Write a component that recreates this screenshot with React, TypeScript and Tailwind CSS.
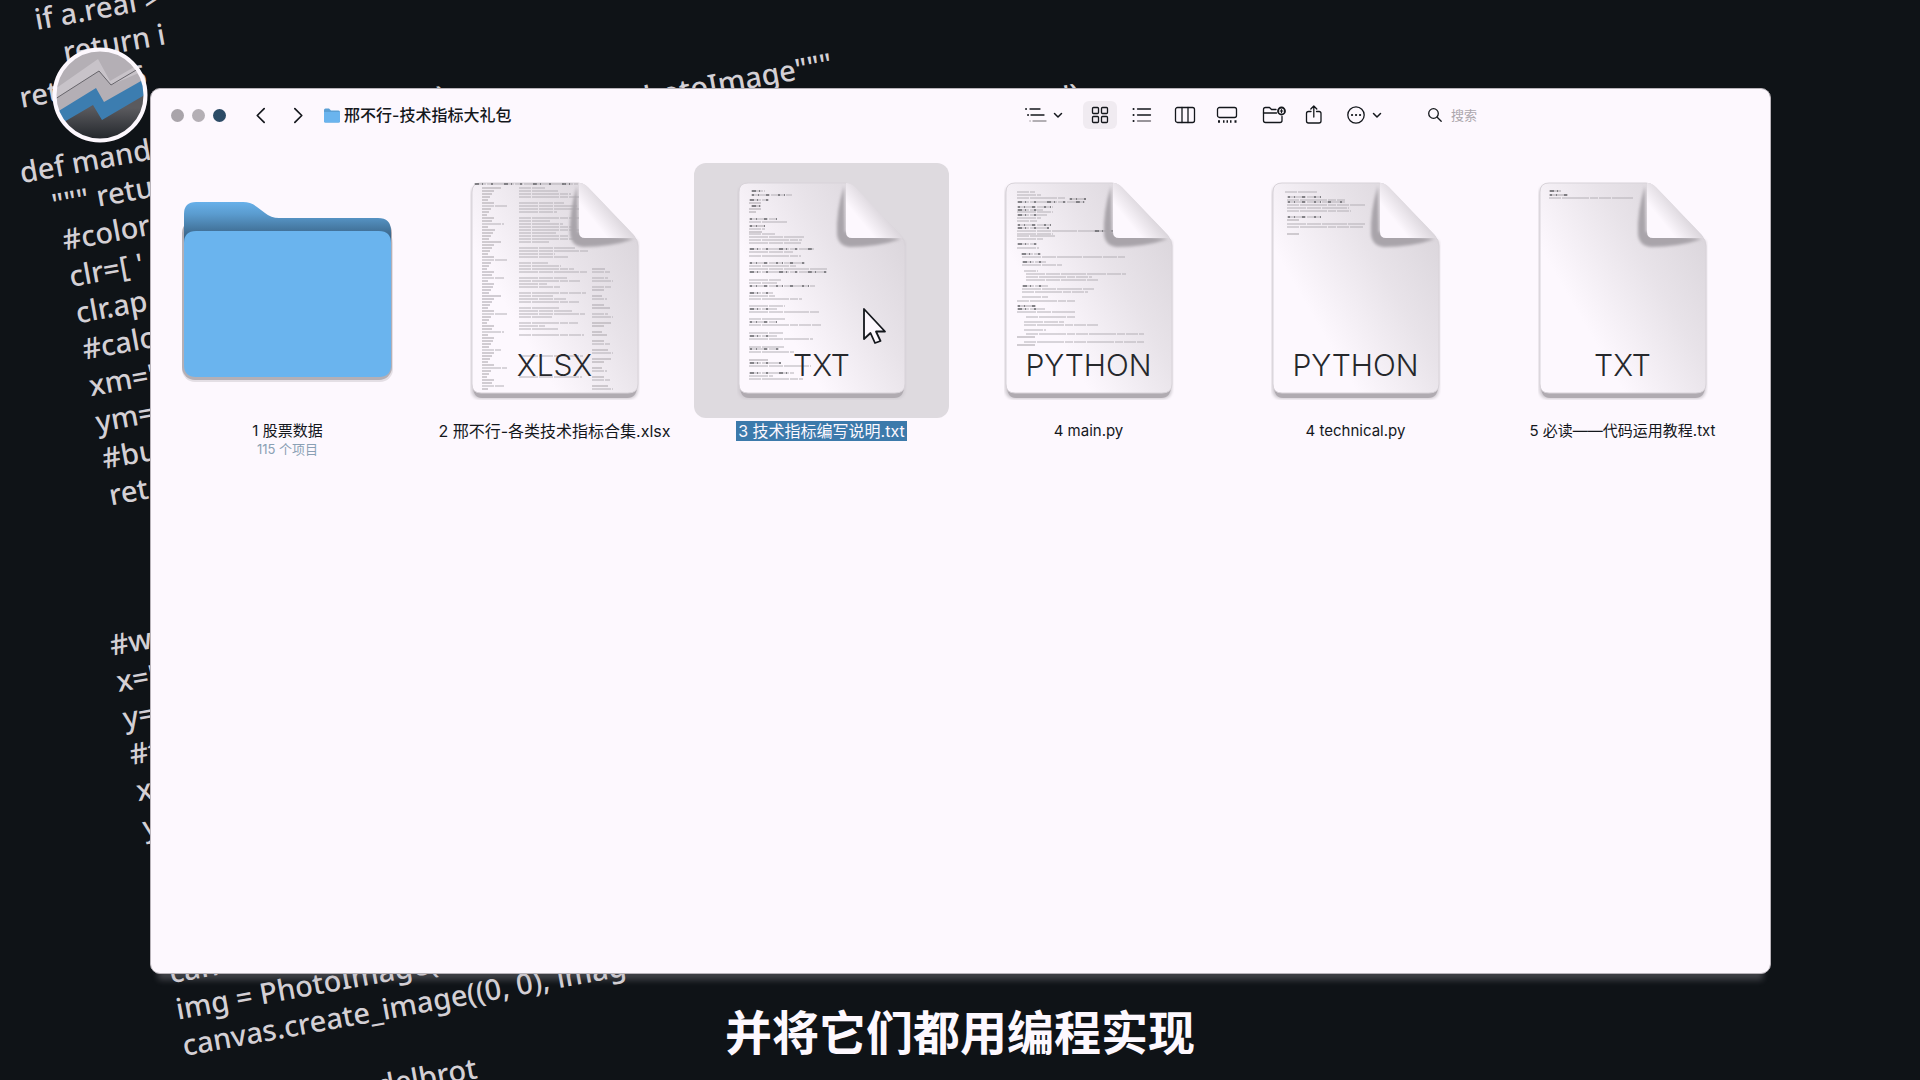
import type { ReactNode } from "react";

type Row = [y: number, x: number, w: number, dark?: boolean];

const CJK = "font-['Inter','Noto_Sans_CJK_SC',sans-serif]";

const CODE: { text: string; indent: string; tail?: string; tailIndent?: string }[] = [
  { text: "if a.real >", indent: "ml-[42px]" },
  { text: "return i", indent: "ml-[64px]" },
  { text: "return 56", indent: "ml-[13px]" },
  { text: "", indent: "" },
  { text: "def mand", indent: "ml-0", tail: "):", tailIndent: "left-[424px]" },
  { text: '""" retu', indent: "ml-[26px]", tail: 'PhotoImage"""', tailIndent: "left-[610px]" },
  { text: "#color", indent: "ml-[30px]" },
  { text: "clr=[ '", indent: "ml-[30px]", tail: "ry')", tailIndent: "left-[1012px]" },
  { text: "clr.ap", indent: "ml-[30px]" },
  { text: "#calc", indent: "ml-[30px]" },
  { text: "xm='", indent: "ml-[30px]" },
  { text: "ym=", indent: "ml-[30px]" },
  { text: "#bu", indent: "ml-[30px]" },
  { text: "ret", indent: "ml-[30px]" },
  { text: "", indent: "" },
  { text: "", indent: "" },
  { text: "", indent: "" },
  { text: "#w", indent: "ml-[4px]" },
  { text: "x='", indent: "ml-[4px]" },
  { text: "y=", indent: "ml-[4px]" },
  { text: "#t", indent: "ml-[4px]" },
  { text: "x", indent: "ml-[4px]" },
  { text: "y", indent: "ml-[4px]" },
  { text: "", indent: "" },
  { text: "", indent: "" },
  { text: "", indent: "" },
  { text: "canv", indent: "ml-[4px]" },
  { text: "img = PhotoImage(", indent: "ml-[4px]" },
  { text: "canvas.create_image((0, 0), imag", indent: "ml-[4px]" },
  { text: "", indent: "" },
  { text: "mandelbrot", indent: "ml-[126px]" },
];

const NOTES_ROWS: Row[] = [
  [9, 14, 14, true], [13, 14, 41, true], [18, 12, 20, true], [21, 12, 12], [24, 14, 10, true], [27, 12, 12], [30, 12, 7],
  [37, 12, 28, true], [40, 12, 38], [44, 12, 16, true], [47, 12, 16], [50, 12, 13], [52, 12, 26], [55, 12, 55], [58, 12, 53], [61, 12, 52],
  [67, 12, 65, true], [70, 12, 44], [74, 12, 52], [81, 12, 56, true], [84, 12, 47], [87, 12, 78], [90, 12, 78, true],
  [98, 12, 32], [101, 12, 28], [104, 12, 66, true], [111, 12, 24, true], [114, 12, 26], [117, 12, 53],
  [124, 12, 36], [127, 12, 28, true], [130, 12, 70], [137, 12, 36], [140, 12, 28, true], [143, 12, 72],
  [151, 12, 35], [154, 12, 28, true], [157, 12, 64], [165, 12, 35], [167, 12, 30, true], [170, 12, 45],
  [178, 12, 20], [181, 12, 32, true], [184, 12, 62], [191, 12, 45, true], [194, 12, 24], [197, 12, 54],
];

const MAIN_ROWS: Row[] = [
  [10, 13, 18], [13, 13, 24], [16, 13, 48], [17, 65, 17, true], [20, 13, 68, true], [25, 13, 36, true], [28, 13, 26, true],
  [30, 13, 36], [33, 13, 30, true], [36, 13, 24], [39, 13, 20], [43, 13, 34, true], [46, 13, 32, true], [49, 13, 96], [49, 90, 19, true],
  [52, 13, 36], [54, 13, 38], [57, 13, 26], [62, 13, 20, true], [66, 13, 22], [72, 17, 20, true], [75, 18, 103],
  [80, 18, 24, true], [83, 18, 40], [89, 20, 14], [92, 22, 100], [95, 22, 66], [98, 22, 72], [104, 18, 26, true],
  [107, 18, 72], [110, 18, 66], [115, 18, 26], [119, 13, 58], [124, 13, 20, true], [127, 13, 28, true], [130, 13, 58],
  [135, 22, 50], [140, 20, 40], [143, 20, 74], [148, 20, 22], [152, 22, 118], [155, 13, 18], [160, 20, 120], [163, 13, 18],
];

const TECH_ROWS: Row[] = [
  [10, 14, 32], [15, 16, 34, true], [18, 16, 58], [20, 16, 58, true], [23, 16, 78], [26, 16, 62], [29, 16, 64],
  [35, 16, 34, true], [38, 16, 12], [42, 16, 78], [45, 16, 76], [52, 16, 12],
];

const GUIDE_ROWS: Row[] = [[9, 11, 12, true], [13, 11, 20, true], [16, 11, 84]];

const SHEET_ROWS: Row[] = [
  [2, 4, 104, true] as Row,
  ...Array.from({ length: 68 }, (_, i): Row[] => {
    const y = 6 + i * 3;
    const rows: Row[] = [[y, 12, 5 + ((i * 7) % 9) + (i % 6 === 0 ? 14 : 0)]];
    if ((y < 150 && i % 5 !== 4) || i % 7 === 0) rows.push([y, 49, 26 + ((i * 13) % 46)]);
    if (y > 82 && i % 3 !== 2) rows.push([y, 122, 10 + ((i * 5) % 12)]);
    return rows;
  }).flat(),
];

function CodeBackdrop() {
  return (
    <div
      aria-hidden="true"
      className="absolute -left-[10px] top-[8px] w-[1400px] origin-top-left -rotate-[10.3deg] font-['Noto_Sans','Open_Sans',sans-serif] text-[29px] font-medium leading-[37px] text-[#d4d0d5]"
    >
      {CODE.map((line, i) => (
        <div key={i} className="relative h-[37px] whitespace-pre">
          <span className={line.indent}>{line.text}</span>
          {line.tail && <span className={`absolute top-0 ${line.tailIndent}`}>{line.tail}</span>}
        </div>
      ))}
    </div>
  );
}

function Avatar() {
  return (
    <svg viewBox="0 0 96 96" className="absolute left-[52px] top-[47px] size-24" role="img" aria-label="频道头像">
      <defs>
        <clipPath id="avatar-clip"><circle cx="48" cy="48" r="45" /></clipPath>
        <linearGradient id="avatar-low" x1="0" y1="0" x2="0" y2="1">
          <stop offset="0.3" stopColor="#5a5a5e" />
          <stop offset="1" stopColor="#1c2025" />
        </linearGradient>
      </defs>
      <g clipPath="url(#avatar-clip)">
        <rect width="96" height="96" fill="#b4afb5" />
        <path d="M0 44 L46 12 L58 34 L96 12 V22 L59 38 L47 24 L0 54Z" fill="#c8c3c9" />
        <path d="M0 54 L47 24 L59 38 L96 16" fill="none" stroke="#66646a" strokeWidth="1" />
        <path d="M0 68 L44 41 L52 55 L96 30 V96 H0Z" fill="#3c7db0" />
        <path d="M0 82 L41 58 L50 73 L96 46 V96 H0Z" fill="url(#avatar-low)" />
      </g>
      <circle cx="48" cy="48" r="45.5" fill="none" stroke="#fdf8fe" strokeWidth="4" />
    </svg>
  );
}

function Chevron({ d, className }: { d: string; className: string }) {
  return (
    <svg viewBox="0 0 16 16" className={className} fill="none" stroke="currentColor" strokeWidth="1.6" strokeLinecap="round" strokeLinejoin="round">
      <path d={d} />
    </svg>
  );
}

function DownChevron() {
  return (
    <svg viewBox="0 0 10 10" className="size-[10px]" fill="none" stroke="currentColor" strokeWidth="1.5" strokeLinecap="round" strokeLinejoin="round">
      <path d="M1.500 3.500 L5 7 L8.500 3.500" />
    </svg>
  );
}

function ToolIcon({ children }: { children: ReactNode }) {
  return (
    <svg viewBox="0 0 24 20" className="h-5 w-6 shrink-0" fill="none" stroke="currentColor" strokeWidth="1.3" strokeLinecap="round" strokeLinejoin="round">
      {children}
    </svg>
  );
}

function ToolButton({ label, className = "", children }: { label: string; className?: string; children: ReactNode }) {
  return (
    <button type="button" aria-label={label} className={`flex h-7 w-[34px] items-center justify-center rounded-md ${className}`}>
      <ToolIcon>{children}</ToolIcon>
    </button>
  );
}

function Toolbar() {
  return (
    <header className="flex h-[52px] items-center pl-5 pr-[10px]">
      <div className="flex gap-2">
        <button type="button" aria-label="关闭" className="size-[13px] rounded-full bg-[#a9a4aa]" />
        <button type="button" aria-label="最小化" className="size-[13px] rounded-full bg-[#b4afb5]" />
        <button type="button" aria-label="缩放" className="size-[13px] rounded-full bg-[#2c4b66]" />
      </div>
      <button type="button" aria-label="后退" className="ml-[23px] flex size-6 items-center justify-center">
        <Chevron d="M10.5 1.5 L4 8 L10.5 14.5" className="size-[17px]" />
      </button>
      <button type="button" aria-label="前进" className="ml-3 flex size-6 items-center justify-center">
        <Chevron d="M5.5 1.5 L12 8 L5.5 14.5" className="size-[17px]" />
      </button>
      <svg viewBox="0 0 16 15" className="ml-[15px] h-[15px] w-4" aria-hidden="true">
        <path d="M0 2 Q0 .5 1.500 .5 H5 L7 2.500 H14.500 Q16 2.500 16 4 V13 Q16 14.500 14.500 14.500 H1.500 Q0 14.500 0 13Z" fill="#5b9fd4" />
        <path d="M0 4 H16 V13 Q16 14.500 14.500 14.500 H1.500 Q0 14.500 0 13Z" fill="#6ab4ee" />
      </svg>
      <h1 className="ml-1 whitespace-nowrap text-base font-medium">邢不行-技术指标大礼包</h1>

      <div className="ml-auto flex items-center">
        <button type="button" aria-label="分组" className="flex items-center gap-[5px]">
          <ToolIcon>
            <path d="M2 4h.1M4 10h.1" strokeWidth="1.800" />
            <path d="M6 4h10M7 10h13" />
            <path d="M6 16h.1M9 16h13" stroke="#9b969c" />
          </ToolIcon>
          <DownChevron />
        </button>
        <ToolButton label="图标视图" className="ml-5 bg-[#f0ebf1]">
          <rect x="4.500" y="2.500" width="6" height="6" rx="1" />
          <rect x="13.500" y="2.500" width="6" height="6" rx="1" />
          <rect x="4.500" y="11.500" width="6" height="6" rx="1" />
          <rect x="13.500" y="11.500" width="6" height="6" rx="1" />
        </ToolButton>
        <ToolButton label="列表视图" className="ml-2">
          <path d="M3.500 4h.1M3.500 10h.1M3.500 16h.1" strokeWidth="2" />
          <path d="M7.500 4h13M7.500 10h13" />
          <path d="M7.500 16h13" stroke="#77737a" />
        </ToolButton>
        <ToolButton label="分栏视图" className="ml-[9px]">
          <rect x="2.500" y="2.500" width="19" height="15" rx="2" />
          <path d="M9 2.500v15M15 2.500v15" />
        </ToolButton>
        <ToolButton label="画廊视图" className="ml-2">
          <rect x="2.500" y="2.500" width="19" height="10" rx="2" />
          <path d="M3 16.500h2M8 16.500h1.500M11.500 16.500h1.500M15 16.500h1.500M19.500 16.500h2" strokeWidth="2.400" strokeLinecap="butt" />
        </ToolButton>
        <ToolButton label="新建文件夹" className="ml-[13px]">
          <path d="M14 4.500H9.500L7.500 2.500H3.500Q1.500 2.500 1.500 4.500V15.500Q1.500 17.500 3.500 17.500H18Q20 17.500 20 15.500V11.500" />
          <path d="M1.500 8H14.500" />
          <circle cx="19.500" cy="6" r="3.500" strokeWidth="1.800" />
          <path d="M19.500 4.500v3M18 6h3" strokeWidth="1.200" />
        </ToolButton>
        <ToolButton label="共享" className="ml-[6px]">
          <path d="M9 6.500H6.500Q4.500 6.500 4.500 8.500V16Q4.500 18 6.500 18H17Q19 18 19 16V8.500Q19 6.500 17 6.500H14.500" />
          <path d="M11.800 12V1.200M8.800 4L11.800 1L14.800 4" />
        </ToolButton>
        <button type="button" aria-label="更多" className="ml-[13px] flex items-center gap-1">
          <ToolIcon>
            <circle cx="12" cy="10" r="8.200" />
            <path d="M8 10h.1M12 10h.1M16 10h.1" strokeWidth="2.200" />
          </ToolIcon>
          <DownChevron />
        </button>
        <label className="ml-[37px] flex w-[341px] items-center gap-2 pl-2">
          <svg viewBox="0 0 16 16" className="size-4 shrink-0" fill="none" stroke="currentColor" strokeWidth="1.300" strokeLinecap="round">
            <circle cx="6.500" cy="6.500" r="4.800" />
            <path d="M10.200 10.200L14.200 14.200" />
          </svg>
          <input
            type="search"
            aria-label="搜索"
            placeholder="搜索"
            className="h-6 w-full bg-transparent text-[13px] outline-none placeholder:text-[#aca7ad]"
          />
        </label>
      </div>
    </header>
  );
}

function FolderIcon() {
  return (
    <svg viewBox="0 -3 214 187" className="h-[187px] w-[214px]" aria-hidden="true">
      <defs>
        <linearGradient id="folder-back" x1="0" y1="0" x2="0" y2="36" gradientUnits="userSpaceOnUse">
          <stop offset="0" stopColor="#6ab4ee" />
          <stop offset="0.4" stopColor="#5a9bce" />
          <stop offset="1" stopColor="#3b668a" />
        </linearGradient>
      </defs>
      <rect x="1" y="30" width="211" height="152" rx="13" fill="#e4dfe5" />
      <rect x="1" y="20" width="210" height="160" rx="13" fill="#b4afb5" />
      <path d="M3 14 Q3 2 15 2 H62 Q70 2 76 7 L84 13 Q90 18 98 18 H197 Q210 18 210 31 V60 H3Z" fill="url(#folder-back)" />
      <path d="M3 43 Q3 31 15 31 H198 Q210 31 210 43 V165 Q210 177 198 177 H15 Q3 177 3 165Z" fill="#6ab4ee" />
    </svg>
  );
}

function DocumentIcon({ id, kind, rows }: { id: string; kind: string; rows: Row[] }) {
  return (
    <div className="relative">
      <svg viewBox="0 0 170 218" className="h-[218px] w-[170px]" aria-hidden="true">
        <defs>
          <linearGradient id={`${id}-page`} x1="1" y1="0.1" x2="0.25" y2="0.65">
            <stop offset="0" stopColor="#d8d3d9" />
            <stop offset="0.5" stopColor="#e8e3e9" />
            <stop offset="1" stopColor="#fdf8fe" />
          </linearGradient>
          <linearGradient id={`${id}-fold`} x1="112" y1="54" x2="144" y2="28" gradientUnits="userSpaceOnUse">
            <stop offset="0.45" stopColor="#fdf8fe" />
            <stop offset="1" stopColor="#dad5db" />
          </linearGradient>
          <filter id={`${id}-soft`} x="-20%" y="-20%" width="140%" height="140%">
            <feGaussianBlur stdDeviation="1.500" />
          </filter>
        </defs>
        <path d="M11 3 H108 L168 60 V206 Q168 217 158 217 H11 Q1 217 1 206 V12 Q1 3 11 3Z" fill="#cfcad0" filter={`url(#${id}-soft)`} />
        <path d="M3 204 H167 Q167 216 157 216 H12 Q3 216 3 204Z" fill="#b0abb1" />
        <path d="M11 1 H108 Q113 1 117 5 L163 53 Q168 58 168 64 V202 Q168 211 158 211 H11 Q2 211 2 202 V10 Q2 1 11 1Z" fill={`url(#${id}-page)`} stroke="#d8d3d9" strokeWidth="1" />
        {rows.map(([y, x, w, dark], i) => (
          <g key={i} fill="none" strokeWidth="1.200">
            <path d={`M${x} ${y}H${x + w}`} stroke="#b4afb5" strokeDasharray={i % 2 ? "19 1 14 1 25 1" : "12 1 27 1 8 1"} />
            {dark && <path d={`M${x + 1} ${y}H${x + w}`} stroke="#35373b" strokeDasharray={i % 2 ? "2 4 1 7 3 9" : "4 3 1 8 2 11"} />}
          </g>
        ))}
        <path d="M107 4 Q99 30 100 52 Q101 64 113 65 Q140 65 164 57 L108 50Z" fill="#a9a4aa" filter={`url(#${id}-soft)`} />
        <path d="M109 1 Q114 1 118 5 L162 51 Q166 55 165 56 H115 Q109 56 109 50Z" fill={`url(#${id}-fold)`} />
      </svg>
      <span className="absolute inset-x-0 bottom-[17px] text-center text-[30px] font-light leading-[36px] text-[#26282c]">{kind}</span>
    </div>
  );
}

function FileItem({
  name,
  detail,
  selected = false,
  large = false,
  children,
}: {
  name: string;
  detail?: string;
  selected?: boolean;
  large?: boolean;
  children: ReactNode;
}) {
  return (
    <li className="flex min-w-0 justify-center">
      <button type="button" aria-pressed={selected} className="flex flex-col items-center">
        <span className={`relative flex size-[255px] items-center justify-center rounded-xl ${selected ? "bg-[#dedadf]" : ""}`}>
          {children}
          {selected && (
            <svg viewBox="0 0 24 38" className="absolute left-[168px] top-[144px] h-[38px] w-6" aria-hidden="true">
              <path d="M2 2 V32 L8.500 26 L13 36 L18.500 34 L14 24.500 H23Z" fill="#fdf8fe" stroke="#14171c" strokeWidth="1.800" strokeLinejoin="round" />
            </svg>
          )}
        </span>
        <span
          className={`mt-[3px] whitespace-nowrap px-[2px] leading-5 ${large ? "text-base leading-5" : "text-[15px]"} ${selected ? "bg-[#3c7aab] text-[#fdf8fe]" : ""}`}
        >
          {name}
        </span>
        {detail && <span className="text-[13px] leading-4 text-[#8aa0b4]">{detail}</span>}
      </button>
    </li>
  );
}

export default function App() {
  return (
    <main className={`relative min-h-screen overflow-hidden bg-[#0f1317] text-[#14171c] ${CJK}`}>
      <CodeBackdrop />
      <Avatar />
      <div className="relative pl-[150px] pr-[149px] pt-[88px]">
        <section
          aria-label="访达"
          className="min-h-[82vh] rounded-[10px] border border-[#b8b3b9] bg-[#fdf8fe] shadow-[0_14px_6px_-8px_rgba(180,175,181,0.3)]"
        >
          <Toolbar />
          <ul className="grid grid-cols-6 pl-[3px] pr-[14px] pt-[22px]">
            <FileItem name="1 股票数据" detail="115 个项目">
              <FolderIcon />
            </FileItem>
            <FileItem name="2 邢不行-各类技术指标合集.xlsx" large>
              <DocumentIcon id="sheet" kind="XLSX" rows={SHEET_ROWS} />
            </FileItem>
            <FileItem name="3 技术指标编写说明.txt" selected large>
              <DocumentIcon id="notes" kind="TXT" rows={NOTES_ROWS} />
            </FileItem>
            <FileItem name="4 main.py">
              <DocumentIcon id="main" kind="PYTHON" rows={MAIN_ROWS} />
            </FileItem>
            <FileItem name="4 technical.py">
              <DocumentIcon id="tech" kind="PYTHON" rows={TECH_ROWS} />
            </FileItem>
            <FileItem name="5 必读——代码运用教程.txt">
              <DocumentIcon id="guide" kind="TXT" rows={GUIDE_ROWS} />
            </FileItem>
          </ul>
        </section>
      </div>
      <p className="relative mt-[25px] text-center text-[47px] font-bold leading-[68px] text-[#fdf8fe]">并将它们都用编程实现</p>
    </main>
  );
}
